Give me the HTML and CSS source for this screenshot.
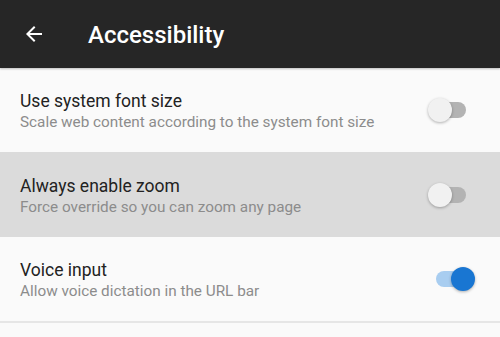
FILE: index.html
```html
<!DOCTYPE html>
<html lang="en">
<head>
    <meta charset="UTF-8">
    <title>Accessibility</title>
    <link rel="stylesheet" href="styles.css">
</head>
<body>

<div class="toolbar">
    <svg class="back" width="24" height="24" viewBox="0 0 24 24">
        <path d="M20 11H7.83l5.59-5.59L12 4l-8 8 8 8 1.41-1.41L7.83 13H20v-2z" fill="#fff"/>
    </svg>
    <h1>Accessibility</h1>
</div>

<div class="settings">
    <div class="row">
        <div class="text">
            <div class="title">Use system font size</div>
            <div class="summary">Scale web content according to the system font size</div>
        </div>
        <div class="switch"><span class="track"></span><span class="thumb"></span></div>
    </div>
    <div class="row pressed">
        <div class="text">
            <div class="title">Always enable zoom</div>
            <div class="summary">Force override so you can zoom any page</div>
        </div>
        <div class="switch"><span class="track"></span><span class="thumb"></span></div>
    </div>
    <div class="row last">
        <div class="text">
            <div class="title">Voice input</div>
            <div class="summary">Allow voice dictation in the URL bar</div>
        </div>
        <div class="switch on"><span class="track"></span><span class="thumb"></span></div>
    </div>
</div>

</body>
</html>
```

FILE: styles.css
```css
body {
    margin: 0;
    font-family: Roboto, "Noto Sans", sans-serif;
    background: #fafafa;
}

.toolbar {
    height: 68px;
    background: #262626;
    display: flex;
    align-items: center;
    padding-left: 22px;
    box-shadow: 0 1px 2px rgba(0, 0, 0, 0.25);
    position: relative;
}

.back {
    width: 24px;
    height: 24px;
}

.toolbar h1 {
    margin: 0 0 0 42px;
    color: #fff;
    font-size: 24px;
    font-weight: 500;
    padding-top: 2px;
}

.row {
    height: 84px;
    display: flex;
    align-items: center;
    padding: 0 20px;
    background: #fafafa;
}

.row.pressed {
    height: 85px;
    background: #dbdbdb;
}

.row.last {
    border-bottom: 2px solid #e6e6e6;
}

.text {
    flex: 1;
    padding-top: 2px;
}

.title {
    font-size: 17.5px;
    color: #222;
    line-height: 22px;
}

.summary {
    font-size: 15.3px;
    color: #8c8c8c;
    line-height: 20px;
}

.switch {
    position: relative;
    width: 50px;
    height: 24px;
    margin-right: 4px;
}

.track {
    position: absolute;
    left: 10px;
    width: 30px;
    top: 4px;
    height: 16px;
    border-radius: 8px;
    background: #b3b3b3;
}

.thumb {
    position: absolute;
    left: 2px;
    top: 0;
    width: 24px;
    height: 24px;
    border-radius: 50%;
    background: #f1f1f1;
    box-shadow: 0 1px 3px rgba(0, 0, 0, 0.3);
}

.switch.on .track {
    background: #a8cdf0;
}

.switch.on .thumb {
    left: 25px;
    background: #1976d2;
}
```
